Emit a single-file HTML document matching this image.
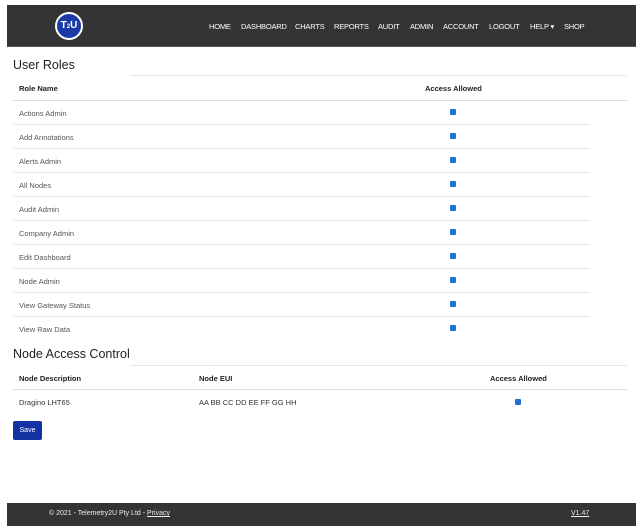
<!DOCTYPE html>
<html><head><style>
body{margin:0;width:642px;height:532px;background:#fff;font-family:"Liberation Sans",sans-serif;position:relative;overflow:hidden;color:#333}
.hdr{position:absolute;left:7px;top:5px;width:629px;height:41px;background:#343434;border-bottom:1px solid #555}
.logo{position:absolute;left:48px;top:7px;width:24px;height:24px;border-radius:50%;background:#1a3aa8;border:2px solid #fff;color:#fff;font-size:10px;font-weight:bold;text-align:center;line-height:24px}
.nav{position:absolute;font-size:7.5px;color:#fff;letter-spacing:-0.2px}
.nav span{position:absolute;white-space:nowrap}
h2{position:absolute;margin:0;font-weight:normal;font-size:12.5px;color:#222}
.t{position:absolute;font-size:7.5px;white-space:nowrap}
.b{font-weight:bold;color:#222}
.line{position:absolute;height:1px;background:#e6e6e6}
.cb{position:absolute;width:6px;height:6px;background:#1f6fd6;border-radius:1px}
.save{position:absolute;left:13px;top:421px;width:29px;height:19px;background:#1433a3;color:#fff;font-size:7px;text-align:center;line-height:19px;border-radius:2px}
.ftr{position:absolute;left:7px;top:503px;width:629px;height:23px;background:#343434;color:#eee;font-size:7px}
</style></head><body>
<div class="hdr">
<div class="logo">T<small style="font-size:6px">2</small>U</div>
<div class="nav" style="top:17px">
<span style="left:202px">HOME</span><span style="left:234px">DASHBOARD</span><span style="left:288px">CHARTS</span><span style="left:327px">REPORTS</span><span style="left:371px">AUDIT</span><span style="left:403px">ADMIN</span><span style="left:436px">ACCOUNT</span><span style="left:482px">LOGOUT</span><span style="left:523px">HELP ▾</span><span style="left:557px">SHOP</span>
</div></div>
<h2 style="left:13px;top:58px">User Roles</h2>
<div class="line" style="left:130px;top:75px;width:497px"></div>
<div class="t b" style="left:19px;top:84px">Role Name</div>
<div class="t b" style="left:425px;top:84px">Access Allowed</div>
<div class="line" style="left:13px;top:100px;width:614px;background:#ddd"></div>
<div id="rows"></div>
<h2 style="left:13px;top:347px">Node Access Control</h2>
<div class="line" style="left:130px;top:365px;width:497px"></div>
<div class="t b" style="left:19px;top:374px">Node Description</div>
<div class="t b" style="left:199px;top:374px">Node EUI</div>
<div class="t b" style="left:490px;top:374px">Access Allowed</div>
<div class="line" style="left:13px;top:389px;width:614px;background:#ddd"></div>
<div class="t" style="left:19px;top:398px">Dragino LHT65</div>
<div class="t" style="left:199px;top:398px">AA BB CC DD EE FF GG HH</div>
<div class="cb" style="left:515px;top:399px"></div>
<div class="save">Save</div>
<div class="ftr"><span style="position:absolute;left:42px;top:7px">© 2021 - Telemetry2U Pty Ltd - <u>Privacy</u></span><span style="position:absolute;left:564px;top:7px"><u>V1.47</u></span></div>
<script>
var r=["Actions Admin","Add Annotations","Alerts Admin","All Nodes","Audit Admin","Company Admin","Edit Dashboard","Node Admin","View Gateway Status","View Raw Data"],h="";
r.forEach(function(n,i){var y=108+i*24;h+='<div class="t" style="left:19px;top:'+(y+0.5)+'px;color:#555">'+n+'</div><div class="cb" style="left:450px;top:'+(y+1)+'px"></div>';if(i<9)h+='<div class="line" style="left:13px;top:'+(y+16)+'px;width:577px"></div>';});
document.getElementById("rows").innerHTML=h;
</script>
</body></html>
